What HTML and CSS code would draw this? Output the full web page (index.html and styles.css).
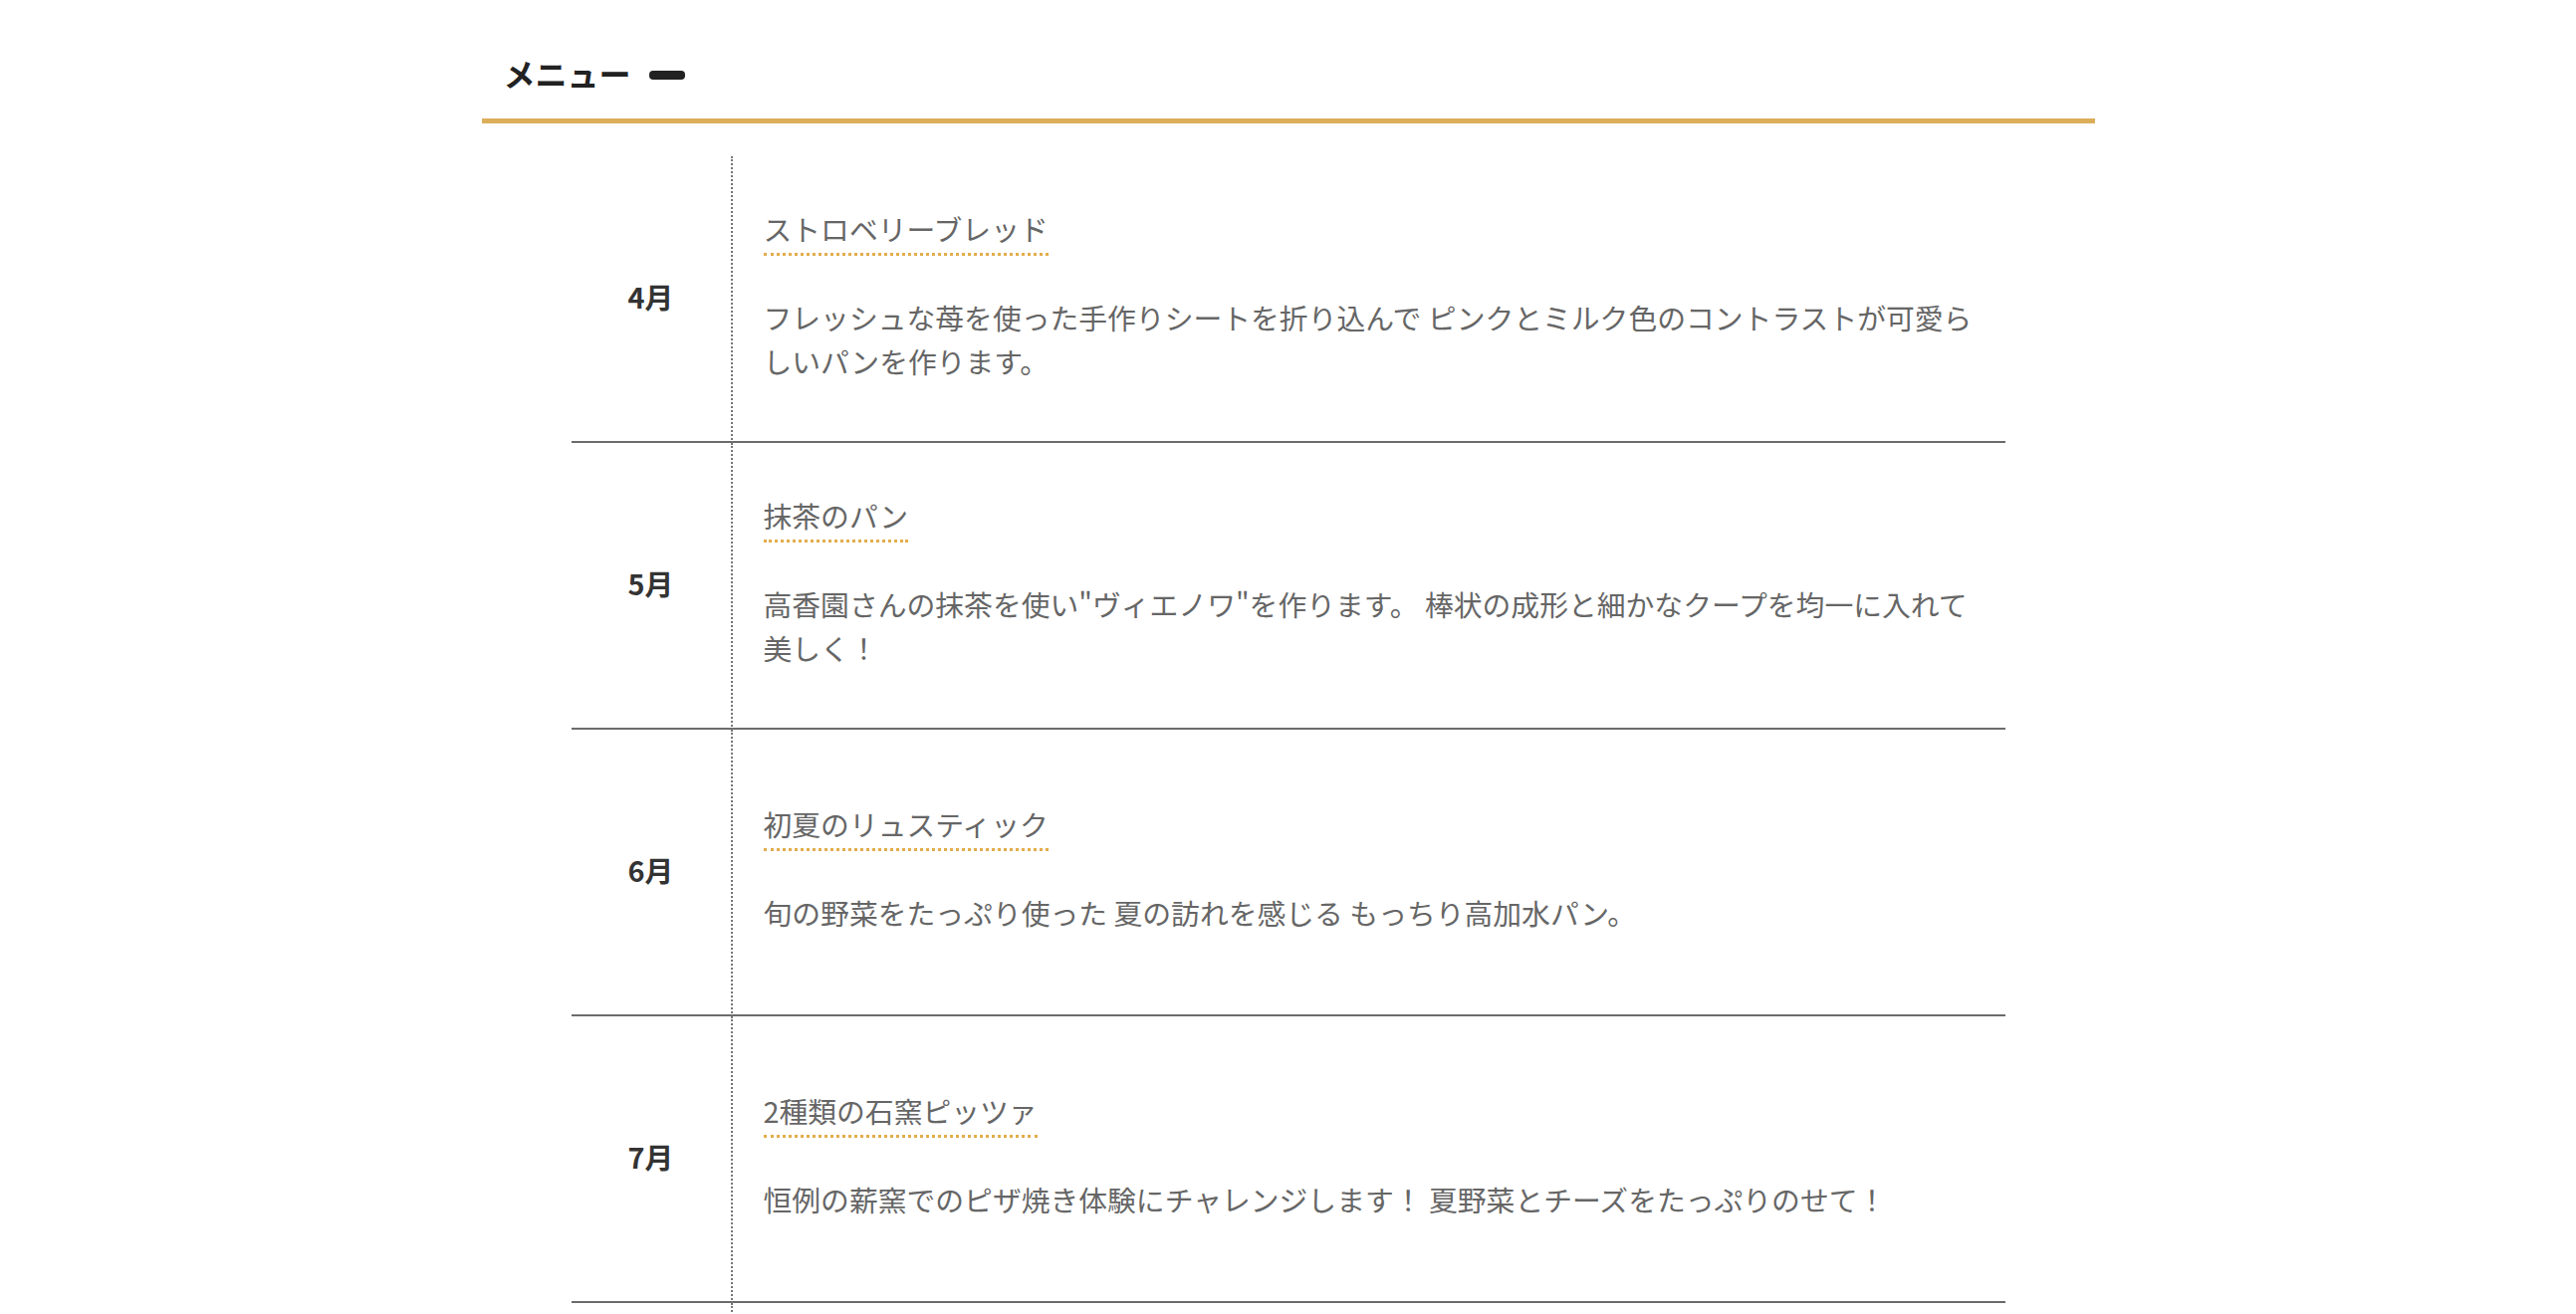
FILE: index.html
```html
<!DOCTYPE html>
<html lang="ja">
<head>
    <meta charset="UTF-8">
    <meta name="viewport" content="width=device-width, initial-scale=1.0">
    <title>メニュー</title>
    <link rel="stylesheet" href="styles.css">
</head>
<body>
    <div class="menu-header">
        <h2>メニュー</h2>
        <span class="toggle-bar"></span>
    </div>

    <table class="menu-table">
        <tr>
            <th>4月</th>
            <td>
                <span class="menu-title">ストロベリーブレッド</span>
                <p class="menu-text">フレッシュな苺を使った手作りシートを折り込んで ピンクとミルク色のコントラストが可愛らしいパンを作ります。</p>
            </td>
        </tr>
        <tr>
            <th>5月</th>
            <td>
                <span class="menu-title">抹茶のパン</span>
                <p class="menu-text">高香園さんの抹茶を使い"ヴィエノワ"を作ります。 棒状の成形と細かなクープを均一に入れて美しく！</p>
            </td>
        </tr>
        <tr>
            <th>6月</th>
            <td>
                <span class="menu-title">初夏のリュスティック</span>
                <p class="menu-text">旬の野菜をたっぷり使った 夏の訪れを感じる もっちり高加水パン。</p>
            </td>
        </tr>
        <tr>
            <th>7月</th>
            <td>
                <span class="menu-title">2種類の石窯ピッツァ</span>
                <p class="menu-text">恒例の薪窯でのピザ焼き体験にチャレンジします！ 夏野菜とチーズをたっぷりのせて！</p>
            </td>
        </tr>
        <tr>
            <th>8月</th>
            <td>
                <span class="menu-title">夏休み親子パン教室</span>
                <p class="menu-text">親子で一緒に楽しくパン作り！ 好きな形に成形して焼き上げます。</p>
            </td>
        </tr>
    </table>
</body>
</html>
```

FILE: styles.css
```css
body {
    margin: 0;
    font-family: "Noto Sans CJK JP", "Noto Sans", sans-serif;
    background-color: #fff;
    color: #666;
}
.menu-header {
    width: 1620px;
    margin: 0 auto;
    padding: 49px 22px 22px;
    box-sizing: border-box;
    display: flex;
    align-items: center;
    gap: 18px;
    border-bottom: 5px solid #dcae5b;
}
.menu-header h2 {
    margin: 0;
    font-size: 32px;
    line-height: 48px;
    font-weight: bold;
    color: #222;
}
.toggle-bar {
    display: inline-block;
    width: 36px;
    height: 9px;
    margin-top: 4px;
    background-color: #222;
    border-radius: 4px;
}
.menu-table {
    width: 1440px;
    margin: 33px auto 0;
    border-collapse: separate;
    border-spacing: 0;
}
.menu-table th,
.menu-table td {
    height: 288px;
    box-sizing: border-box;
    border-bottom: 2px solid #6b6b6b;
    vertical-align: middle;
}
.menu-table th {
    width: 162px;
    padding: 0 0 6px;
    border-right: 2px dotted #777;
    font-size: 28.8px;
    font-weight: bold;
    color: #333;
    text-align: center;
}
.menu-table td {
    padding: 0 30px 8px 31px;
    text-align: left;
}
.menu-title {
    display: inline-block;
    font-size: 28.8px;
    line-height: 1.5;
    padding-bottom: 3px;
    border-bottom: 3px dotted #e2ad4c;
    color: #666;
}
.menu-text {
    margin: 40px 0 0;
    font-size: 28.8px;
    line-height: 1.5;
    color: #666;
}
```
